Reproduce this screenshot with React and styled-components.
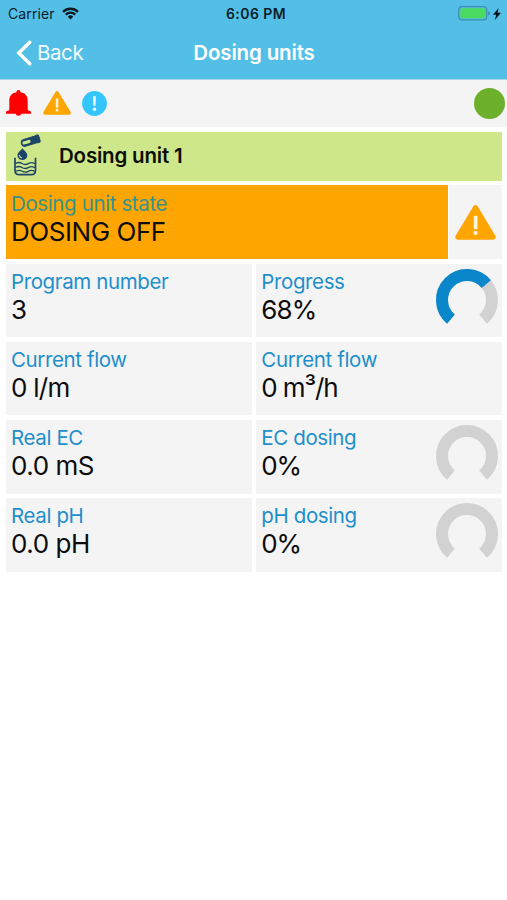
import React from "react";
import styled, { createGlobalStyle, ThemeProvider } from "styled-components";

const theme = {
    color: {
        primary: "#54bfe6",
        panel: "#f4f4f4",
        label: "#1e8fcb",
        warning: "#ffa500",
        unit: "#cfe78b",
        ok: "#6db02c",
        alarm: "#ff0000",
        info: "#33c5fc",
        progress: "#0a86cb",
        track: "#d2d2d2",
    },
};

const GlobalStyle = createGlobalStyle`
    * {
        box-sizing: border-box;
    }
    body {
        margin: 0;
        background-color: #ffffff;
        color: #0c0c0c;
        font-family: Inter, "Liberation Sans", sans-serif;
    }
    svg {
        display: block;
        flex: none;
        overflow: visible;
    }
`;

const Screen = styled.div`
    width: 507px;
    height: 900px;
    overflow: hidden;
    background-color: #ffffff;
`;
const Header = styled.header`
    height: 80px;
    background-color: ${(props) => props.theme.color.primary};
    border-bottom: 1px solid #a9d9ea;
`;
const StatusBar = styled.div`
    display: grid;
    grid-template-columns: 1fr auto 1fr;
    align-items: center;
    height: 27px;
    padding: 0 6px 0 8px;
    color: #0b2029;
    font-size: 14px;
    line-height: 20px;
`;
const StatusGroup = styled.div`
    display: flex;
    align-items: center;
    justify-content: ${(props) => (props.$end ? "flex-end" : "flex-start")};
    gap: ${(props) => (props.$end ? "3px" : "7px")};
`;
const Carrier = styled.span`
    letter-spacing: 0.1px;
`;
const Clock = styled.span`
    padding-left: 3px;
    font-size: 14px;
    font-weight: 600;
    letter-spacing: 0.45px;
`;
const NavBar = styled.nav`
    display: grid;
    grid-template-columns: 1fr auto 1fr;
    align-items: center;
    height: 51px;
    padding: 0 16px;
    color: #ffffff;
`;
const BackButton = styled.div`
    display: flex;
    align-items: center;
    gap: 5px;
    font-size: 20.5px;
    letter-spacing: -0.4px;
    color: #f2fbfe;
`;
const Title = styled.h1`
    margin: 0;
    padding-left: 1px;
    font-size: 20.5px;
    font-weight: 600;
    letter-spacing: -0.15px;
`;
const Toolbar = styled.div`
    display: flex;
    align-items: center;
    justify-content: space-between;
    height: 47px;
    padding: 0 2px 1px 6px;
    background-color: ${(props) => props.theme.color.panel};
`;
const AlertList = styled.div`
    display: flex;
    align-items: center;
    gap: 11.5px;
`;
const StatusDot = styled.div`
    width: 31px;
    height: 31px;
    border-radius: 50%;
    background-color: ${(props) => props.theme.color.ok};
`;
const Content = styled.main`
    display: flex;
    flex-direction: column;
    gap: 4.6px;
    padding: 4.5px 5px 0 6px;
`;
const UnitBar = styled.div`
    display: flex;
    align-items: center;
    gap: 15px;
    height: 49.3px;
    padding-left: 7px;
    background-color: ${(props) => props.theme.color.unit};
`;
const UnitName = styled.h2`
    margin: 0;
    padding-bottom: 2px;
    font-size: 20.5px;
    font-weight: 600;
    letter-spacing: -0.2px;
    color: #0b0f05;
`;
const StateRow = styled.div`
    display: grid;
    grid-template-columns: 442px 1fr;
    gap: 1px;
    height: 73.6px;
`;
const CellGrid = styled.div`
    display: grid;
    grid-template-columns: 1fr 1fr;
    grid-auto-rows: 73.6px;
    gap: 4.6px;
`;
const Cell = styled.div`
    display: flex;
    justify-content: ${(props) => (props.$center ? "center" : "space-between")};
    align-items: ${(props) => (props.$center ? "center" : "flex-start")};
    padding: ${(props) => (props.$center ? "0" : "5px 4px 0 5px")};
    padding-top: ${(props) => props.$warning && "6px"};
    background-color: ${(props) => (props.$warning ? props.theme.color.warning : props.theme.color.panel)};
`;
const Label = styled.div`
    font-size: 20.5px;
    line-height: 25px;
    letter-spacing: -0.38px;
    color: ${(props) => (props.$muted ? "#38928e" : props.theme.color.label)};
`;
const Value = styled.div`
    font-size: 26px;
    line-height: 32px;
    letter-spacing: ${(props) => props.$spacing || "-0.45px"};
    white-space: pre;
`;

const WifiIcon = () => (
    <svg width="17" height="13" viewBox="0 0 17 13" fill="none" stroke="#0a1a20" strokeWidth="2.3">
        <path d="M1 4.8a10.8 10.8 0 0 1 15 0" />
        <path d="M3.7 7.6a7 7 0 0 1 9.6 0" />
        <path d="M8.5 12.4 5.8 9.7a3.8 3.8 0 0 1 5.4 0z" fill="#0a1a20" stroke="none" />
    </svg>
);

const BatteryIcon = () => (
    <svg width="32" height="15" viewBox="0 0 32 15">
        <rect x="0.7" y="0.7" width="28" height="13.2" rx="3.4" fill="none" stroke="#3f8db0" strokeWidth="1.2" />
        <rect x="2.3" y="2.3" width="24.8" height="10" rx="2" fill="#4cdb61" />
        <path d="M30 5.2q2 .6 2 2.2t-2 2.2z" fill="#3f8db0" />
    </svg>
);

const BoltIcon = () => (
    <svg width="8" height="12" viewBox="0 0 8 12">
        <path d="M5.6 0 0 6.8h3.2L1.9 12 8 4.8H4.6z" fill="#04141b" />
    </svg>
);

const ChevronIcon = () => (
    <svg width="16" height="26" viewBox="0 0 16 26">
        <path d="M13.8 2.2 2.8 13l11 10.8" fill="none" stroke="#ffffff" strokeWidth="3.4" strokeLinecap="round" />
    </svg>
);

const BellIcon = () => (
    <svg width="25" height="26" viewBox="0 0 25 26">
        <path
            d="M12.5 0c1.300 0 2 .9 2 2.200 5 .8 7.200 4 7.200 8.600v8.400q0 1.600 3.300 2.200v2.300H0v-2.300q3.300-.6 3.300-2.200v-8.400c0-4.600 2.200-7.800 7.200-8.600C10.500.9 11.200 0 12.500 0zM9.600 23.700h5.800q-.5 2.100-2.900 2.100t-2.900-2.100z"
            fill={theme.color.alarm}
        />
    </svg>
);

const WarningIcon = ({ width, height }) => (
    <svg width={width} height={height} viewBox="0 0 40 35" preserveAspectRatio="none">
        <path
            d="M17.8 1.400q2.200-2.800 4.400 0L39.400 30.800q1.300 3.600-2.400 4H3q-3.700-.4-2.400-4z"
            fill={theme.color.warning}
        />
        <path d="M18.300 10.800h3.600v13.400h-3.600z" fill="#fff3d8" />
        <circle cx="20.100" cy="27.900" r="2.100" fill="#fff3d8" />
    </svg>
);

const InfoIcon = () => (
    <svg width="25" height="25" viewBox="0 0 25 25">
        <circle cx="12.500" cy="12.500" r="12.400" fill={theme.color.info} />
        <path d="M11.100 5.200h2.800l-.4 9.600h-2z" fill="#effbff" />
        <circle cx="12.500" cy="18.200" r="1.700" fill="#effbff" />
    </svg>
);

// test tube dripping into a beaker
const DosingIcon = () => (
    <svg width="31" height="40" viewBox="0 0 31 40" fill="none" stroke="#1d4567" strokeLinecap="round">
        <g transform="rotate(-17 17 5)">
            <rect x="8" y="1.700" width="17" height="7" rx="3.500" fill="#1d4567" strokeWidth="1" />
            <rect x="23" y="1.300" width="3.800" height="7.800" rx="1.500" fill="#1d4567" strokeWidth="1" />
            <path d="M10.500 3.600h5.500q1.500 0 1.500 1.500t-1.500 1.600h-5.500q-1.300 0-1.300-1.600t1.300-1.500z" fill="#cfe78b" stroke="none" />
        </g>
        <path d="M9.400 12.200c1.600 2.400 4.900 4.200 4.900 7a4.900 4.900 0 0 1-9.800 0c0-2.800 3.300-4.600 4.900-7z" fill="#1d4567" stroke="none" />
        <path d="M6.500 19.300q.2 2 2 2.600" stroke="#d9eaa8" strokeWidth="1.100" />
        <path d="M2 22.300v11.900q0 4.500 4.500 4.500h11.500q4.500 0 4.500-4.500V22.300" strokeWidth="1.700" />
        <path d="M3 27.300q3-1.700 6 .2t6.300.1 6.300-.1M3 31.300q3-1.700 6 .2t6.300.1 6.300-.1M3.500 35q3-1.500 5.700.2t6 .1 5.800-.2" strokeWidth="1.300" />
    </svg>
);

const polar = (deg) => {
    const rad = (deg * Math.PI) / 180;
    return `${31 + 25 * Math.sin(rad)} ${31 - 25 * Math.cos(rad)}`;
};
const arc = (from, to) => `M${polar(from)}A25 25 0 ${to - from > 180 ? 1 : 0} 1 ${polar(to)}`;

const Gauge = ({ value }) => (
    <svg width="62" height="62" viewBox="0 0 62 62" fill="none" strokeWidth="12">
        <path d={arc(-140, 140)} stroke={theme.color.track} />
        {value > 0 && <path d={arc(-140, -140 + 2.8 * value)} stroke={theme.color.progress} />}
    </svg>
);

const cells = [
    { label: "Program number", value: "3" },
    { label: "Progress", value: "68%", gauge: 68, spacing: "-0.9px" },
    { label: "Current flow", value: "0 l/m", spacing: "-0.75px" },
    { label: "Current flow", value: "0 m³/h", spacing: "-1.1px" },
    { label: "Real EC", value: "0.0 mS" },
    { label: "EC dosing", value: "0%", gauge: 0, spacing: "-1.2px" },
    { label: "Real pH", value: "0.0 pH" },
    { label: "pH dosing", value: "0%", gauge: 0, spacing: "-1.2px" },
];

const App = () => {
    return (
        <ThemeProvider theme={theme}>
            <GlobalStyle />
            <Screen>
                <Header>
                    <StatusBar>
                        <StatusGroup>
                            <Carrier>Carrier</Carrier>
                            <WifiIcon />
                        </StatusGroup>
                        <Clock>6:06 PM</Clock>
                        <StatusGroup $end>
                            <BatteryIcon />
                            <BoltIcon />
                        </StatusGroup>
                    </StatusBar>
                    <NavBar>
                        <BackButton>
                            <ChevronIcon />
                            <span>Back</span>
                        </BackButton>
                        <Title>Dosing units</Title>
                    </NavBar>
                </Header>
                <Toolbar>
                    <AlertList>
                        <BellIcon />
                        <WarningIcon width="28" height="24" />
                        <InfoIcon />
                    </AlertList>
                    <StatusDot />
                </Toolbar>
                <Content>
                    <UnitBar>
                        <DosingIcon />
                        <UnitName>Dosing unit 1</UnitName>
                    </UnitBar>
                    <StateRow>
                        <Cell $warning>
                            <div>
                                <Label $muted>Dosing unit state</Label>
                                <Value>DOSING OFF</Value>
                            </div>
                        </Cell>
                        <Cell $center>
                            <WarningIcon width="41" height="35" />
                        </Cell>
                    </StateRow>
                    <CellGrid>
                        {cells.map((cell, index) => (
                            <Cell key={index}>
                                <div>
                                    <Label>{cell.label}</Label>
                                    <Value $spacing={cell.spacing}>{cell.value}</Value>
                                </div>
                                {cell.gauge !== undefined && <Gauge value={cell.gauge} />}
                            </Cell>
                        ))}
                    </CellGrid>
                </Content>
            </Screen>
        </ThemeProvider>
    );
};
export default App;
